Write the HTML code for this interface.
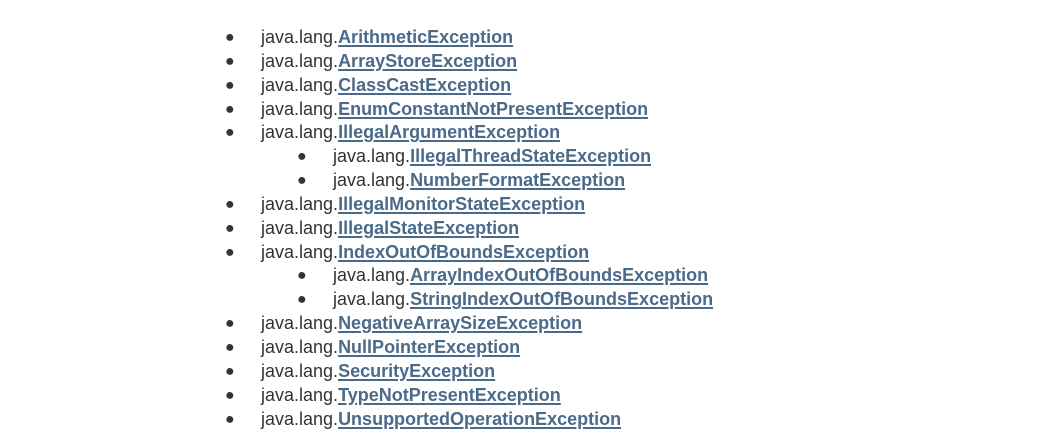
<!DOCTYPE html>
<html><head><style>
body{margin:0;background:#fff;font-family:"Liberation Sans",Arial,sans-serif;font-size:18px;color:#333;}
.l{position:absolute;left:0;top:26px;width:1062px}
.r{height:23.85px;line-height:23.85px;position:relative;white-space:nowrap}
.r span.b{position:absolute;font-size:16px}
.r span.t{position:absolute}
a{color:#4a6a8a;font-weight:bold;text-decoration:underline;text-underline-offset:2px;text-decoration-thickness:2px}
</style></head><body><div class="l">
<div class="r"><span class="b" style="left:225px">●</span><span class="t" style="left:261px">java.lang.<a>ArithmeticException</a></span></div>
<div class="r"><span class="b" style="left:225px">●</span><span class="t" style="left:261px">java.lang.<a>ArrayStoreException</a></span></div>
<div class="r"><span class="b" style="left:225px">●</span><span class="t" style="left:261px">java.lang.<a>ClassCastException</a></span></div>
<div class="r"><span class="b" style="left:225px">●</span><span class="t" style="left:261px">java.lang.<a>EnumConstantNotPresentException</a></span></div>
<div class="r"><span class="b" style="left:225px">●</span><span class="t" style="left:261px">java.lang.<a>IllegalArgumentException</a></span></div>
<div class="r"><span class="b" style="left:297px">●</span><span class="t" style="left:333px">java.lang.<a>IllegalThreadStateException</a></span></div>
<div class="r"><span class="b" style="left:297px">●</span><span class="t" style="left:333px">java.lang.<a>NumberFormatException</a></span></div>
<div class="r"><span class="b" style="left:225px">●</span><span class="t" style="left:261px">java.lang.<a>IllegalMonitorStateException</a></span></div>
<div class="r"><span class="b" style="left:225px">●</span><span class="t" style="left:261px">java.lang.<a>IllegalStateException</a></span></div>
<div class="r"><span class="b" style="left:225px">●</span><span class="t" style="left:261px">java.lang.<a>IndexOutOfBoundsException</a></span></div>
<div class="r"><span class="b" style="left:297px">●</span><span class="t" style="left:333px">java.lang.<a>ArrayIndexOutOfBoundsException</a></span></div>
<div class="r"><span class="b" style="left:297px">●</span><span class="t" style="left:333px">java.lang.<a>StringIndexOutOfBoundsException</a></span></div>
<div class="r"><span class="b" style="left:225px">●</span><span class="t" style="left:261px">java.lang.<a>NegativeArraySizeException</a></span></div>
<div class="r"><span class="b" style="left:225px">●</span><span class="t" style="left:261px">java.lang.<a>NullPointerException</a></span></div>
<div class="r"><span class="b" style="left:225px">●</span><span class="t" style="left:261px">java.lang.<a>SecurityException</a></span></div>
<div class="r"><span class="b" style="left:225px">●</span><span class="t" style="left:261px">java.lang.<a>TypeNotPresentException</a></span></div>
<div class="r"><span class="b" style="left:225px">●</span><span class="t" style="left:261px">java.lang.<a>UnsupportedOperationException</a></span></div>
</div></body></html>
